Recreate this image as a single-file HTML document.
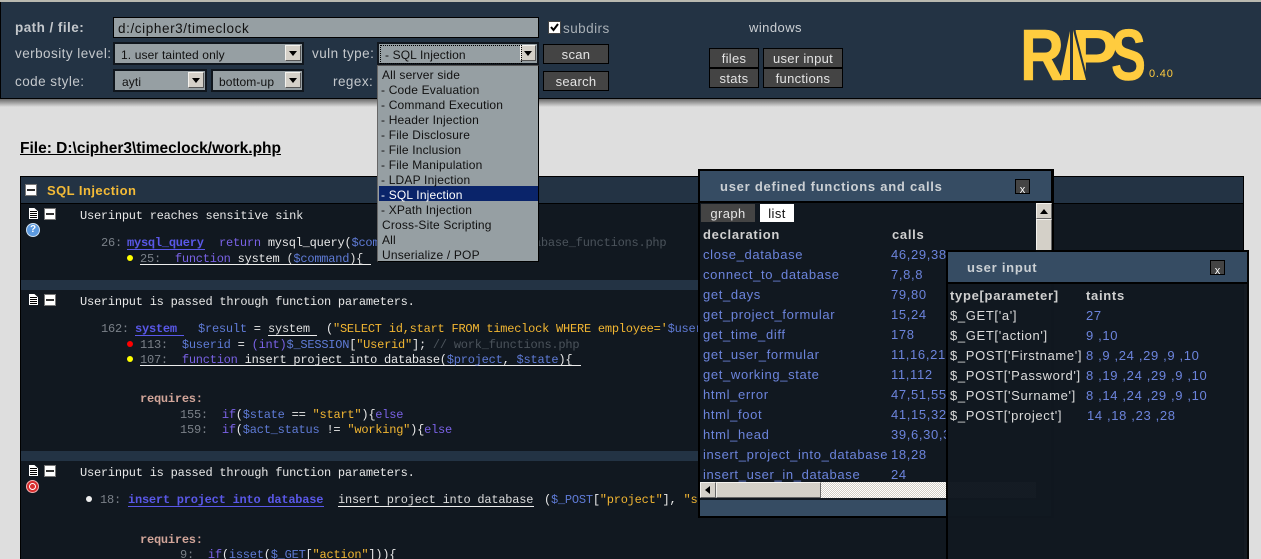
<!DOCTYPE html>
<html><head><meta charset="utf-8"><title>RIPS</title>
<style>
html,body{margin:0;padding:0;width:1261px;height:559px;overflow:hidden;background:#dedede}
body{position:relative;font-family:"Liberation Sans",sans-serif;font-size:13px;color:#ccc}
div,span.a,a{position:absolute}
.t{white-space:nowrap;line-height:16px;height:16px}
.lb{color:#c4c8cc;font-size:13.5px;letter-spacing:.45px}
.box{background:#969fa3;border:1px solid #000;box-sizing:border-box}
.sel{background:#969fa3;border:2px solid #10161d;box-sizing:border-box;color:#111;font-size:12px;line-height:23px;padding-left:6px;letter-spacing:.12px;white-space:nowrap}
.ar{right:1px;top:1px;width:16px;height:16px;background:#d4d0c8;box-sizing:border-box;border:1px solid;border-color:#f4f2ee #555 #555 #f4f2ee}
.ar:after{content:"";position:absolute;left:3px;top:5px;border:4px solid transparent;border-top:5px solid #000;border-bottom:0}
.btn{background:#444;border:1px solid #000;box-sizing:border-box;color:#e4e4e4;text-align:center;font-size:13px;line-height:19px;letter-spacing:.3px}
.opt{left:3px;margin-top:1px;color:#111;font-size:12px;letter-spacing:.18px;line-height:15px;height:15px;white-space:nowrap}
.c{margin-top:2px;font-family:"Liberation Mono",monospace;font-size:12px;letter-spacing:-.23px;white-space:pre;line-height:15px;height:15px;color:#ddd}
.g{color:#7a8088}.k{color:#7a62e6}.v{color:#5f7bd6}.s{color:#f2b632}.w{color:#e8e8e8}.m{color:#4b535b}.o{color:#6f7ee0}
.bl{font-weight:bold;color:#5a58e8;border-bottom:1px solid #5a58e8}
.u{border-bottom:1px solid #eee}
.req{color:#d3a69a;font-weight:bold}
.dot{width:6px;height:6px;border-radius:50%}
.hd{left:0;right:0;background:#233344}
.wt{margin-top:1px;font-weight:bold;font-size:13px;letter-spacing:.75px;color:#cbd0d4;white-space:nowrap}
.r{margin-top:1px;color:#6c84dc;font-size:13px;letter-spacing:.65px;white-space:nowrap;line-height:16px}
.h{margin-top:1px;color:#d0d0d0;font-weight:bold;font-size:13px;letter-spacing:.7px;white-space:nowrap;line-height:16px}
.p{margin-top:1px;color:#dcdcdc;font-size:13px;letter-spacing:.65px;white-space:nowrap;line-height:16px}
.x{background:#444;border:1px solid #000;box-sizing:border-box;width:15px;height:15px;color:#fff;font-size:11px;line-height:20px;text-align:center;overflow:hidden}
.sb{background:#d4d0c8;box-sizing:border-box;border:1px solid;border-color:#f4f2ee #666 #666 #f4f2ee}
.doc{width:9px;height:11px;background:#fff;clip-path:polygon(0 0,60% 0,100% 30%,100% 100%,0 100%)}
.doc:after{content:"";position:absolute;left:1px;top:3px;width:7px;height:7px;background:repeating-linear-gradient(#000 0 1px,#fff 1px 2px)}
.min{width:10px;height:10px;background:#fff;border:1px solid #777}
.min:after{content:"";position:absolute;left:1px;top:4px;width:8px;height:2px;background:#333}
</style></head><body>

<!-- header -->
<div style="left:0;top:0;width:1261px;height:2px;background:#b9b9b0"></div>
<div style="left:0;top:2px;width:1261px;height:97px;background:#233344;border-bottom:1px solid #000;border-left:1px solid #000;box-sizing:border-box"></div>
<div style="left:0;top:99px;width:1261px;height:8px;background:linear-gradient(#6a6a6a,#dedede)"></div>

<div class="t lb" style="left:15px;top:20px;font-weight:bold;font-size:13.5px">path / file:</div>
<div class="t lb" style="left:15px;top:46px">verbosity level:</div>
<div class="t lb" style="left:15px;top:74px">code style:</div>
<div class="t lb" style="left:312px;top:46px">vuln type:</div>
<div class="t lb" style="left:333px;top:74px">regex:</div>

<div class="box" style="left:113px;top:17px;width:426px;height:21px;color:#111;font-size:13.5px;line-height:21px;padding-left:4px;letter-spacing:.6px">d:/cipher3/timeclock</div>
<div class="sel" style="left:113px;top:42px;width:191px;height:23px">1. user tainted only<div class="ar"></div></div>
<div class="sel" style="left:377px;top:42px;width:162px;height:23px">- SQL Injection<div class="ar"></div><div style="left:1px;top:1px;width:140px;height:17px;border:1px dotted #000"></div></div>
<div class="sel" style="left:113px;top:69px;width:94px;height:23px;padding-left:7px">ayti<div class="ar"></div></div>
<div class="sel" style="left:211px;top:69px;width:93px;height:23px">bottom-up<div class="ar"></div></div>

<div style="left:548px;top:21px;width:13px;height:13px;background:#fff;border:1px solid #444;box-sizing:border-box"><svg width="11" height="11" style="position:absolute;left:0;top:0"><path d="M2 5l2.500 3L9 2" fill="none" stroke="#000" stroke-width="2"/></svg></div>
<div class="t lb" style="left:563px;top:21px;color:#a9b0b6">subdirs</div>
<div class="btn" style="left:543px;top:44px;width:66px;height:20px">scan</div>
<div class="btn" style="left:543px;top:71px;width:66px;height:20px">search</div>

<div class="t lb" style="left:749px;top:20px;font-size:13px;color:#ccd0d4">windows</div>
<div class="btn" style="left:709px;top:48px;width:50px;height:20px">files</div>
<div class="btn" style="left:763px;top:48px;width:80px;height:20px">user input</div>
<div class="btn" style="left:709px;top:68px;width:50px;height:20px">stats</div>
<div class="btn" style="left:763px;top:68px;width:80px;height:20px">functions</div>

<!-- logo -->
<svg width="150" height="70" style="position:absolute;left:1020px;top:20px" font-family="Liberation Sans" font-weight="bold" fill="#ffcc3f">
<title>RIPS</title>
<text x="0" y="60" font-size="72" textLength="44" lengthAdjust="spacingAndGlyphs" stroke="#ffcc3f" stroke-width=".5">R</text>
<text x="51" y="60" font-size="72" textLength="47" lengthAdjust="spacingAndGlyphs">P</text>
<polygon points="48,5 54,5 68,60 68,70 48,70" fill="#233344"/>
<rect x="66" y="44" width="30" height="20" fill="#233344"/>
<polygon points="40,60 50,11 50,60"/><polygon points="53,10 66,60 53,60"/>
<text x="91" y="60" font-size="72" textLength="35" lengthAdjust="spacingAndGlyphs" stroke="#ffcc3f" stroke-width=".5">S</text>
</svg>
<div style="left:1149px;top:67px;color:#ffcc3f;font-size:11px;line-height:14px;letter-spacing:.8px">0.40</div>

<!-- title -->
<div class="t" style="left:20px;top:140px;height:18px;line-height:18px;color:#000;font-size:15.5px;font-weight:bold;text-decoration:underline">File: D:\cipher3\timeclock/work.php</div>

<!-- panel -->
<div style="left:20px;top:176px;width:1224px;height:383px;background:#111820;border:1px solid #000;border-bottom:0;box-sizing:border-box;overflow:hidden">
  <div class="hd" style="top:0;height:26px;border-bottom:1px solid #000"></div>
  <div class="hd" style="top:103px;height:10px"></div>
  <div class="hd" style="top:274px;height:10px"></div>
</div>
<div class="min" style="left:25px;top:184px"></div>
<div class="t" style="left:47px;top:183px;color:#f4bb37;font-weight:bold;font-size:13px;letter-spacing:.45px">SQL Injection</div>

<!-- block 1 -->
<div class="doc" style="left:29px;top:208px"></div><div class="min" style="left:44px;top:208px"></div>
<div style="left:26px;top:223px;width:14px;height:14px;border-radius:50%;background:#5c9ae0;border:1px solid #cfe0f0;box-sizing:border-box;color:#fff;font-size:10px;font-weight:bold;line-height:12px;text-align:center">?</div>
<div class="c w" style="left:80px;top:207px">Userinput reaches sensitive sink</div>
<div class="c g" style="left:101px;top:234px">26:</div>
<div class="c bl" style="left:127px;top:234px;height:13px;width:78px">mysql_query</div>
<div class="c" style="left:219px;top:234px"><span class="k">return</span> <span class="w">mysql_query(</span><span class="v">$command</span><span class="w">);</span></div>
<div class="c m" style="left:513px;top:234px">database_functions.php</div>
<div class="dot" style="left:127px;top:255px;background:#ff0"></div>
<div class="c u" style="left:140px;top:250px;height:12px;width:231px"><span class="g">25:</span>  <span class="k">function</span> <span class="w">system</span> (<span class="v">$command</span>){</div>

<!-- block 2 -->
<div class="doc" style="left:29px;top:294px"></div><div class="min" style="left:44px;top:294px"></div>
<div class="c w" style="left:80px;top:293px">Userinput is passed through function parameters.</div>
<div class="c g" style="left:101px;top:320px">162:</div>
<div class="c bl" style="left:135px;top:320px;height:13px;width:49px">system</div>
<div class="c" style="left:198px;top:320px"><span class="v">$result</span> <span class="w">=</span></div>
<div class="c u" style="left:268px;top:320px;height:13px;width:49px">system</div>
<div class="c" style="left:326px;top:320px"><span class="w">(</span><span class="s">"SELECT id,start FROM timeclock WHERE employee='</span><span class="v">$user</span></div>
<div class="dot" style="left:127px;top:341px;background:#f00"></div>
<div class="c" style="left:140px;top:336px"><span class="g">113:</span>  <span class="v">$userid</span> <span class="w">=</span> <span class="k">(int)</span><span class="v">$_SESSION</span><span class="w">[</span><span class="s">"Userid"</span><span class="w">];</span> <span class="m">// work_functions.php</span></div>
<div class="dot" style="left:127px;top:356px;background:#ff0"></div>
<div class="c u" style="left:140px;top:351px;height:12px;width:441px"><span class="g">107:</span>  <span class="k">function</span> <span class="w">insert project into database(</span><span class="v">$project</span><span class="w">,</span> <span class="v">$state</span><span class="w">){</span></div>
<div class="c req" style="left:140px;top:390px">requires:</div>
<div class="c" style="left:180px;top:406px"><span class="g">155:</span>  <span class="k">if</span><span class="w">(</span><span class="v">$state</span> <span class="w">==</span> <span class="s">"start"</span><span class="w">){</span><span class="k">else</span></div>
<div class="c" style="left:180px;top:421px"><span class="g">159:</span>  <span class="k">if</span><span class="w">(</span><span class="v">$act_status</span> <span class="w">!=</span> <span class="s">"working"</span><span class="w">){</span><span class="k">else</span></div>

<!-- block 3 -->
<div class="doc" style="left:29px;top:465px"></div><div class="min" style="left:44px;top:465px"></div>
<div style="left:26px;top:480px;width:13px;height:13px;border-radius:50%;background:#d82c2c;border:1px solid #f5b0b0;box-sizing:border-box"><div style="left:2px;top:2px;width:7px;height:7px;border:1px solid #fff;border-radius:50%;box-sizing:border-box"></div></div>
<div class="c w" style="left:80px;top:464px">Userinput is passed through function parameters.</div>
<div class="dot" style="left:86px;top:496px;background:#eee"></div>
<div class="c g" style="left:100px;top:491px">18:</div>
<div class="c bl" style="left:128px;top:491px;height:13px;width:196px">insert project into database</div>
<div class="c u" style="left:338px;top:491px;height:13px;width:196px">insert project into database</div>
<div class="c" style="left:544px;top:491px"><span class="w">(</span><span class="v">$_POST</span><span class="w">[</span><span class="s">"project"</span><span class="w">],</span> <span class="s">"start"</span></div>
<div class="c req" style="left:140px;top:531px">requires:</div>
<div class="c" style="left:180px;top:546px"><span class="g">9:</span>  <span class="k">if</span><span class="w">(</span><span class="v">isset</span><span class="w">(</span><span class="v">$_GET</span><span class="w">[</span><span class="s">"action"</span><span class="w">])){</span></div>

<!-- function window -->
<div style="left:698px;top:169px;width:356px;height:349px;background:#111820;border:2px solid #000;border-right-width:3px;box-sizing:border-box"></div>
<div style="left:700px;top:171px;width:351px;height:30px;background:#364c63;border-bottom:2px solid #000"></div>
<div class="wt" style="left:720px;top:178px;line-height:16px">user defined functions and calls</div>
<div class="x" style="left:1015px;top:179px">x</div>
<div style="left:701px;top:204px;width:54px;height:18px;background:#444;color:#e4e4e4;text-align:center;line-height:20px;font-size:13px;letter-spacing:.4px">graph</div>
<div style="left:760px;top:204px;width:34px;height:18px;background:#fff;color:#111;text-align:center;line-height:20px;font-size:13px;letter-spacing:.4px">list</div>
<div class="h" style="left:703px;top:226px">declaration</div><div class="h" style="left:892px;top:226px">calls</div>
<div class="r" style="left:703px;top:246px">close_database</div><div class="r" style="left:891px;top:246px;width:56px;overflow:hidden">46,29,38</div>
<div class="r" style="left:703px;top:266px">connect_to_database</div><div class="r" style="left:891px;top:266px">7,8,8</div>
<div class="r" style="left:703px;top:286px">get_days</div><div class="r" style="left:891px;top:286px">79,80</div>
<div class="r" style="left:703px;top:306px">get_project_formular</div><div class="r" style="left:891px;top:306px">15,24</div>
<div class="r" style="left:703px;top:326px">get_time_diff</div><div class="r" style="left:891px;top:326px">178</div>
<div class="r" style="left:703px;top:346px">get_user_formular</div><div class="r" style="left:891px;top:346px;width:55px;overflow:hidden">11,16,21</div>
<div class="r" style="left:703px;top:366px">get_working_state</div><div class="r" style="left:891px;top:366px">11,112</div>
<div class="r" style="left:703px;top:386px">html_error</div><div class="r" style="left:891px;top:386px;width:55px;overflow:hidden">47,51,55</div>
<div class="r" style="left:703px;top:406px">html_foot</div><div class="r" style="left:891px;top:406px;width:55px;overflow:hidden">41,15,32</div>
<div class="r" style="left:703px;top:426px">html_head</div><div class="r" style="left:891px;top:426px;width:55px;overflow:hidden">39,6,30,3</div>
<div class="r" style="left:703px;top:446px">insert_project_into_database</div><div class="r" style="left:891px;top:446px">18,28</div>
<div class="r" style="left:703px;top:466px;height:15px;overflow:hidden">insert_user_in_database</div><div class="r" style="left:891px;top:466px;height:15px;overflow:hidden">24</div>
<!-- scrollbars -->
<div class="sb" style="left:1036px;top:203px;width:16px;height:16px"><div style="left:3px;top:5px;border:4px solid transparent;border-bottom:5px solid #000;border-top:0"></div></div>
<div class="sb" style="left:1036px;top:219px;width:16px;height:40px"></div>
<div style="left:700px;top:482px;width:336px;height:16px;background:repeating-conic-gradient(#d4d0c8 0 25%,#fff 0 50%) 0 0/2px 2px"></div>
<div class="sb" style="left:700px;top:482px;width:16px;height:16px"><div style="left:4px;top:3px;border:4px solid transparent;border-right:5px solid #000;border-left:0"></div></div>
<div class="sb" style="left:716px;top:482px;width:105px;height:16px"></div>
<div style="left:700px;top:500px;width:351px;height:16px;background:#364c63"></div>

<!-- user input window -->
<div style="left:946px;top:250px;width:303px;height:309px;background:#111820;border:2px solid #000;border-bottom:0;box-sizing:border-box;opacity:.98"></div>
<div style="left:948px;top:252px;width:299px;height:30px;background:#364c63;border-bottom:2px solid #000"></div>
<div class="wt" style="left:967px;top:259px;line-height:16px">user input</div>
<div class="x" style="left:1210px;top:260px">x</div>
<div class="h" style="left:950px;top:287px">type[parameter]</div><div class="h" style="left:1086px;top:287px">taints</div>
<div class="p" style="left:950px;top:307px">$_GET['a']</div><div class="r" style="left:1086px;top:307px">27</div>
<div class="p" style="left:950px;top:327px">$_GET['action']</div><div class="r" style="left:1086px;top:327px">9 ,10</div>
<div class="p" style="left:950px;top:347px">$_POST['Firstname']</div><div class="r" style="left:1086px;top:347px">8 ,9 ,24 ,29 ,9 ,10</div>
<div class="p" style="left:950px;top:367px">$_POST['Password']</div><div class="r" style="left:1086px;top:367px">8 ,19 ,24 ,29 ,9 ,10</div>
<div class="p" style="left:950px;top:387px">$_POST['Surname']</div><div class="r" style="left:1086px;top:387px">8 ,14 ,24 ,29 ,9 ,10</div>
<div class="p" style="left:950px;top:407px">$_POST['project']</div><div class="r" style="left:1087px;top:407px">14 ,18 ,23 ,28</div>

<!-- dropdown -->
<div style="left:377px;top:65px;width:162px;height:197px;background:#969fa3;border:1px solid;border-color:#555 #000 #000 #666;box-sizing:border-box">
  <div style="left:1px;top:120px;width:159px;height:15px;background:#0a246a"></div>
  <div class="opt" style="top:1px;left:4px">All server side</div>
  <div class="opt" style="top:16px">- Code Evaluation</div>
  <div class="opt" style="top:31px">- Command Execution</div>
  <div class="opt" style="top:46px">- Header Injection</div>
  <div class="opt" style="top:61px">- File Disclosure</div>
  <div class="opt" style="top:76px">- File Inclusion</div>
  <div class="opt" style="top:91px">- File Manipulation</div>
  <div class="opt" style="top:106px">- LDAP Injection</div>
  <div class="opt" style="top:121px;color:#fff">- SQL Injection</div>
  <div class="opt" style="top:136px">- XPath Injection</div>
  <div class="opt" style="top:151px;left:4px">Cross-Site Scripting</div>
  <div class="opt" style="top:166px;left:4px">All</div>
  <div class="opt" style="top:181px;left:4px">Unserialize / POP</div>
</div>
</body></html>
